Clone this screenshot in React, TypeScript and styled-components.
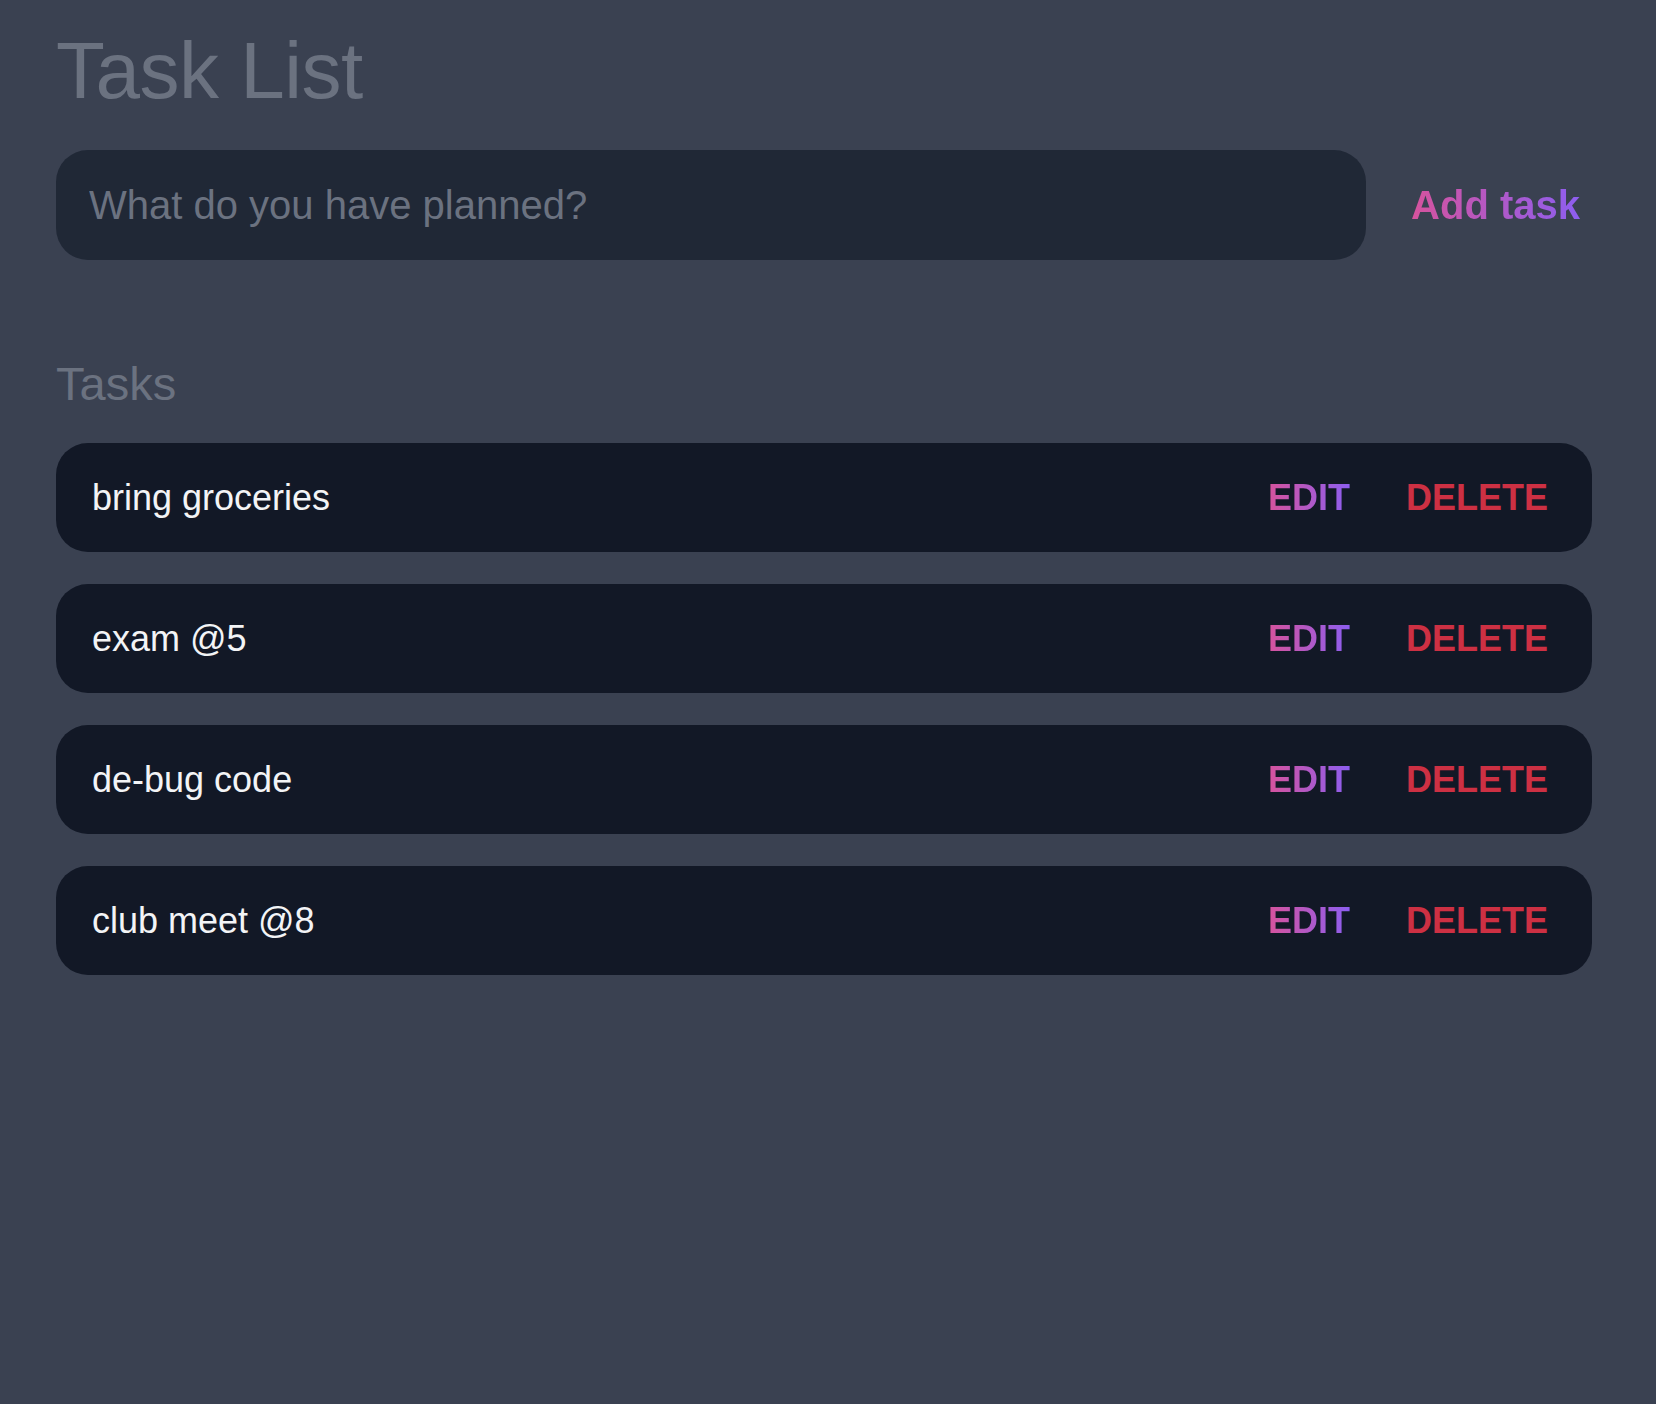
import React from "react";
import styled, { createGlobalStyle } from "styled-components";

const GlobalStyle = createGlobalStyle`
  html, body {
    margin: 0;
    padding: 0;
    background: #3a4151;
    min-height: 100%;
  }
  body {
    font-family: "Liberation Sans", Arial, Helvetica, sans-serif;
    min-height: 1404px;
  }
  * { box-sizing: border-box; }
`;

const Page = styled.main`
  display: flex;
  flex-direction: column;
  padding: 31px 64px 0 56px;
`;

const Title = styled.h1`
  margin: 0;
  font-size: 80px;
  line-height: 80px;
  font-weight: 300;
  color: #6b7280;
  letter-spacing: -0.5px;
`;

const Form = styled.form`
  display: flex;
  align-items: center;
  gap: 33px;
  margin-top: 39px;
`;

const TaskInput = styled.input`
  flex: 1;
  height: 110px;
  border: none;
  outline: none;
  border-radius: 32px;
  background: #202836;
  padding: 0 33px;
  font-family: "Liberation Sans", Arial, sans-serif;
  font-size: 40px;
  color: #e5e7eb;
  &::placeholder {
    color: #6b7280;
  }
`;

const gradientText = `
  background: linear-gradient(to right, #d6539d, #8d5ef0);
  -webkit-background-clip: text;
  background-clip: text;
  color: transparent;
`;

const AddButton = styled.button`
  border: none;
  background: none;
  padding: 0 12px;
  font-family: "Liberation Sans", Arial, sans-serif;
  font-size: 40px;
  font-weight: 700;
  cursor: pointer;
  span {
    ${gradientText}
  }
`;

const SectionTitle = styled.h2`
  margin: 101px 0 0;
  font-size: 47px;
  line-height: 46px;
  font-weight: 300;
  color: #6b7280;
`;

const List = styled.ul`
  list-style: none;
  margin: 36px 0 0;
  padding: 0;
  display: flex;
  flex-direction: column;
  gap: 32px;
`;

const Row = styled.li`
  display: flex;
  align-items: center;
  height: 109px;
  border-radius: 32px;
  background: #121826;
  padding: 0 44px 0 36px;
`;

const TaskText = styled.span`
  flex: 1;
  font-size: 36px;
  color: #f3f4f6;
`;

const Actions = styled.div`
  display: flex;
  align-items: center;
  gap: 56px;
`;

const ActionButton = styled.button<{ $variant: "edit" | "delete" }>`
  border: none;
  background: none;
  padding: 0;
  font-family: "Liberation Sans", Arial, sans-serif;
  font-size: 36px;
  font-weight: 700;
  text-transform: uppercase;
  cursor: pointer;
  span {
    ${(p) => (p.$variant === "edit" ? gradientText : "color: #cd3043;")}
  }
`;

const tasks = ["bring groceries", "exam @5", "de-bug code", "club meet @8"];

export default function App() {
  return (
    <>
      <GlobalStyle />
      <Page>
        <Title>Task List</Title>
        <Form onSubmit={(e) => e.preventDefault()}>
          <TaskInput placeholder="What do you have planned?" />
          <AddButton type="submit">
            <span>Add task</span>
          </AddButton>
        </Form>
        <SectionTitle>Tasks</SectionTitle>
        <List>
          {tasks.map((t) => (
            <Row key={t}>
              <TaskText>{t}</TaskText>
              <Actions>
                <ActionButton $variant="edit">
                  <span>Edit</span>
                </ActionButton>
                <ActionButton $variant="delete">
                  <span>Delete</span>
                </ActionButton>
              </Actions>
            </Row>
          ))}
        </List>
      </Page>
    </>
  );
}
